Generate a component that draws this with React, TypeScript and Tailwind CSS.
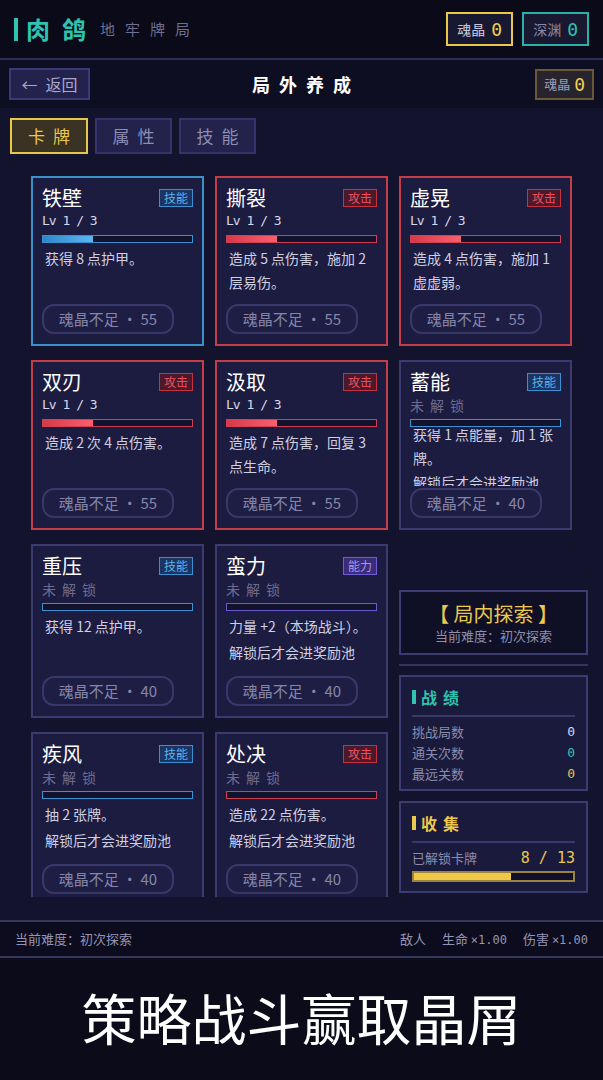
import React from "react";

type Kind = "skill" | "attack" | "power";

type CardData = {
  name: string;
  kind: Kind;
  locked: boolean;
  lines: string[];
  cost: number;
  squeeze?: boolean;
};

const cards: CardData[] = [
  { name: "铁壁", kind: "skill", locked: false, lines: ["获得 8 点护甲。"], cost: 55 },
  { name: "撕裂", kind: "attack", locked: false, lines: ["造成 5 点伤害，施加 2", "层易伤。"], cost: 55 },
  { name: "虚晃", kind: "attack", locked: false, lines: ["造成 4 点伤害，施加 1", "虚虚弱。"], cost: 55 },
  { name: "双刃", kind: "attack", locked: false, lines: ["造成 2 次 4 点伤害。"], cost: 55 },
  { name: "汲取", kind: "attack", locked: false, lines: ["造成 7 点伤害，回复 3", "点生命。"], cost: 55 },
  {
    name: "蓄能",
    kind: "skill",
    locked: true,
    lines: ["获得 1 点能量，加 1 张", "牌。", "解锁后才会进奖励池"],
    cost: 40,
    squeeze: true,
  },
  { name: "重压", kind: "skill", locked: true, lines: ["获得 12 点护甲。"], cost: 40 },
  { name: "蛮力", kind: "power", locked: true, lines: ["力量 +2（本场战斗）。", "解锁后才会进奖励池"], cost: 40 },
  { name: "疾风", kind: "skill", locked: true, lines: ["抽 2 张牌。", "解锁后才会进奖励池"], cost: 40 },
  { name: "处决", kind: "attack", locked: true, lines: ["造成 22 点伤害。", "解锁后才会进奖励池"], cost: 40 },
];

const tagLabel: Record<Kind, string> = { skill: "技能", attack: "攻击", power: "能力" };

const tagClass: Record<Kind, string> = {
  skill: "border-[#3a8fd0] bg-[#1c3462] text-[#5ab4f0]",
  attack: "border-[#c8323f] bg-[#4a1a2c] text-[#f0505e]",
  power: "border-[#6e5cd8] bg-[#3a2c78] text-[#a898f4]",
};

const cardBorder: Record<Kind, string> = {
  skill: "border-[#3a90c8]",
  attack: "border-[#c43e4a]",
  power: "border-[#3b3b70]",
};

const barBorder: Record<Kind, string> = {
  skill: "border-[#3a90d0]",
  attack: "border-[#d04050]",
  power: "border-[#6a5ad0]",
};

const barFill: Record<Kind, string> = {
  skill: "bg-gradient-to-r from-[#2e86c8] to-[#5ab8f4]",
  attack: "bg-gradient-to-r from-[#d83848] to-[#f86070]",
  power: "bg-[#8070e0]",
};

const cjk = "font-['Noto_Sans_CJK_SC','Noto_Sans',sans-serif]";
const mono = "font-['DejaVu_Sans_Mono','Noto_Sans_CJK_SC',monospace]";

function Card({ c }: { c: CardData }) {
  return (
    <div
      className={`flex flex-col h-full overflow-hidden border-2 bg-[#1c1c40] px-[9px] pt-[6px] pb-[10px] ${
        c.locked ? "border-[#3b3b70]" : cardBorder[c.kind]
      }`}
    >
      <div className="flex items-center justify-between">
        <span className="text-[20px] leading-[28px] text-white">{c.name}</span>
        <span className={`border px-[4px] text-[12px] leading-[16px] ${tagClass[c.kind]}`}>
          {tagLabel[c.kind]}
        </span>
      </div>
      {c.locked ? (
        <div className="text-[14px] leading-[18px] tracking-[6px] text-[#6c6c90]">未解锁</div>
      ) : (
        <div className={`${mono} text-[13px] leading-[18px] tracking-[-1px] text-[#d8d8ec]`}>Lv 1 / 3</div>
      )}
      <div className={`mt-[5px] h-[8px] border bg-[#12122c] ${barBorder[c.kind]}`}>
        {!c.locked && <div className={`h-full w-1/3 ${barFill[c.kind]}`} />}
      </div>
      {c.squeeze ? (
        <div className="my-[2px] flex flex-1 flex-col justify-center overflow-hidden px-[3px] text-[14px] leading-[24px] text-[#cfcfe2]">
          {c.lines.map((l) => (
            <div key={l} className="whitespace-nowrap">
              {l}
            </div>
          ))}
        </div>
      ) : (
        <div className="mt-[3px] px-[3px] text-[14px] leading-[24px] text-[#cfcfe2]">
          {c.lines.map((l, i) => (
            <div key={l} className={`whitespace-nowrap ${i > 0 && c.locked ? "mt-[2px]" : ""}`}>
              {l}
            </div>
          ))}
        </div>
      )}
      <div className="mt-auto flex h-[30px] w-[132px] items-center justify-center rounded-[12px] border-2 border-[#38386a] bg-[#1e1e44] text-[15px] text-[#8686aa]">
        魂晶不足 · {c.cost}
      </div>
    </div>
  );
}

function Panel({ children, className = "" }: { children: React.ReactNode; className?: string }) {
  return <div className={`border-2 border-[#3c3c72] ${className}`}>{children}</div>;
}

export default function App() {
  return (
    <div className={`${cjk} flex h-[1080px] w-[603px] flex-col overflow-hidden bg-[#13132e]`}>
      {/* top bar */}
      <div className="flex h-[60px] items-center justify-between border-b-2 border-[#2e2e56] bg-[#0a0a18] pl-[14px] pr-[14px]">
        <div className="flex items-center">
          <div className="h-[23px] w-[4px] bg-[#2ec4b0]" />
          <span className="ml-[8px] text-[24px] font-bold tracking-[12px] text-[#2ec4b0]">肉鸽</span>
          <span className="ml-[2px] text-[15px] tracking-[10px] text-[#6e6e8e]">地牢牌局</span>
        </div>
        <div className="flex items-center gap-[9px]">
          <div className="flex h-[34px] items-center gap-[6px] border-2 border-[#e8c84a] bg-[#181830] px-[9px]">
            <span className="text-[14px] text-[#c8c8dc]">魂晶</span>
            <span className={`${mono} text-[18px] text-[#f0d050]`}>0</span>
          </div>
          <div className="flex h-[34px] items-center gap-[6px] border-2 border-[#2ab0a8] bg-[#181830] px-[9px]">
            <span className="text-[14px] text-[#8888a8]">深渊</span>
            <span className={`${mono} text-[18px] text-[#2ec4b0]`}>0</span>
          </div>
        </div>
      </div>

      {/* title bar */}
      <div className="relative flex h-[48px] items-center justify-between bg-[#0e0e22] px-[9px]">
        <div className="flex h-[32px] w-[81px] items-center justify-center gap-[8px] border-2 border-[#3a3a76] bg-[#22224c] text-[16px] text-[#a8a8cc]">
          <span>←</span>
          <span>返回</span>
        </div>
        <div className="absolute left-1/2 -translate-x-1/2 pl-[9px] text-[18px] font-bold tracking-[9px] text-white">
          局外养成
        </div>
        <div className="flex h-[31px] items-center gap-[4px] border-2 border-[#6a5838] bg-[#28242e] px-[7px]">
          <span className="text-[13px] text-[#a0a0b8]">魂晶</span>
          <span className={`${mono} text-[18px] text-[#f0d050]`}>0</span>
        </div>
      </div>

      {/* tabs */}
      <div className="flex h-[52px] items-start gap-[7px] px-[10px] pt-[10px]">
        <div className="flex h-[36px] w-[78px] items-center justify-center border-2 border-[#e8c84a] bg-[#3a3222] text-[17px] tracking-[8px] text-[#ecc84c]">
          <span className="ml-[8px]">卡牌</span>
        </div>
        <div className="flex h-[36px] w-[77px] items-center justify-center border-2 border-[#34346c] bg-[#22224a] text-[17px] tracking-[8px] text-[#8c8cb4]">
          <span className="ml-[8px]">属性</span>
        </div>
        <div className="flex h-[36px] w-[77px] items-center justify-center border-2 border-[#34346c] bg-[#22224a] text-[17px] tracking-[8px] text-[#8c8cb4]">
          <span className="ml-[8px]">技能</span>
        </div>
      </div>

      {/* card list */}
      <div className="h-[737px] overflow-hidden pl-[31px] pt-[16px]">
        <div className="grid grid-cols-[173px_173px_173px] grid-rows-[170px_170px_174px_174px] gap-x-[11px] gap-y-[14px]">
          {cards.slice(0, 8).map((c) => (
            <Card key={c.name} c={c} />
          ))}
          <div className="col-start-3 row-start-3 row-span-2 w-[189px] pt-[46px]">
            <Panel className="flex h-[65px] flex-col items-center justify-center bg-[#0f0f26]">
              <div className="whitespace-pre text-[20px] leading-[26px] text-[#ecc84c]">【 局内探索 】</div>
              <div className="text-[13px] leading-[18px] text-[#9090ac]">当前难度：初次探索</div>
            </Panel>
            <div className="mt-[9px] h-[2px] bg-[#34345e]" />
            <Panel className="mt-[9px] h-[116px] bg-[#1a1a3c] px-[11px] pt-[8px]">
              <div className="flex items-center gap-[5px]">
                <div className="h-[14px] w-[4px] bg-[#2ec4b0]" />
                <span className="text-[16px] font-bold tracking-[6px] text-[#2ec4b0]">战绩</span>
              </div>
              <div className="mt-[6px] h-[2px] bg-[#38386a]" />
              <div className="mt-[5px] flex flex-col gap-[1px] text-[13px] leading-[20px] text-[#8c8cac]">
                <div className="flex justify-between">
                  <span>挑战局数</span>
                  <span className={`${mono} text-[#d8d8ec]`}>0</span>
                </div>
                <div className="flex justify-between">
                  <span>通关次数</span>
                  <span className={`${mono} text-[#2ec4b0]`}>0</span>
                </div>
                <div className="flex justify-between">
                  <span>最远关数</span>
                  <span className={`${mono} text-[#e8c04a]`}>0</span>
                </div>
              </div>
            </Panel>
            <Panel className="mt-[10px] h-[92px] bg-[#1a1a3c] px-[11px] pt-[8px]">
              <div className="flex items-center gap-[5px]">
                <div className="h-[14px] w-[4px] bg-[#ecc84c]" />
                <span className="text-[16px] font-bold tracking-[6px] text-[#ecc84c]">收集</span>
              </div>
              <div className="mt-[6px] h-[2px] bg-[#38386a]" />
              <div className="mt-[5px] flex items-center justify-between text-[13px] leading-[20px]">
                <span className="text-[#8c8cac]">已解锁卡牌</span>
                <span className={`${mono} text-[15px] text-[#ecc84c]`}>8 / 13</span>
              </div>
              <div className="mt-[3px] h-[11px] border-2 border-[#9a8440] bg-[#10102a]">
                <div className="h-full w-[61%] bg-[#f0c848]" />
              </div>
            </Panel>
          </div>
          {cards.slice(8).map((c) => (
            <Card key={c.name} c={c} />
          ))}
        </div>
      </div>

      <div className="h-[23px]" />

      {/* status bar */}
      <div className="flex h-[38px] items-center justify-between border-y-2 border-[#36365e] bg-[#0c0c1e] px-[15px] text-[13px] text-[#9494b4]">
        <span>当前难度：初次探索</span>
        <div className="flex items-center gap-[16px]">
          <span>敌人</span>
          <span>
            生命 <span className={`${mono} text-[12px]`}>×1.00</span>
          </span>
          <span>
            伤害 <span className={`${mono} text-[12px]`}>×1.00</span>
          </span>
        </div>
      </div>

      {/* footer slogan */}
      <div className="flex flex-1 items-center justify-center bg-[#0b0b1a] pb-[6px]">
        <span className="text-[55px] leading-none text-white">策略战斗赢取晶屑</span>
      </div>
    </div>
  );
}
